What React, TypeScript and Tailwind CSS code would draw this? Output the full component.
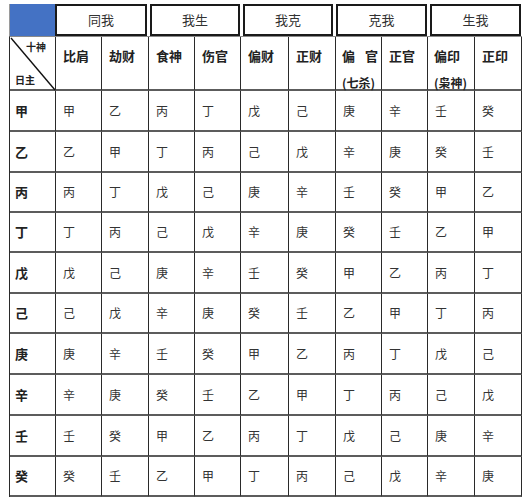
import React from 'react';

const GROUPS = [
  { label: '同我', w: 'w-[92px]' },
  { label: '我生', w: 'w-[90px]' },
  { label: '我克', w: 'w-[90px]' },
  { label: '克我', w: 'w-[91px]' },
  { label: '生我', w: 'w-[91px]' },
];

const COLS = 'grid-cols-[46px_46px_47px_46px_46px_48px_47px_46px_46px_47px_47px]';

const STEMS = ['甲', '乙', '丙', '丁', '戊', '己', '庚', '辛', '壬', '癸'];

const ROWS: string[][] = [
  ['甲', '乙', '丙', '丁', '戊', '己', '庚', '辛', '壬', '癸'],
  ['乙', '甲', '丁', '丙', '己', '戊', '辛', '庚', '癸', '壬'],
  ['丙', '丁', '戊', '己', '庚', '辛', '壬', '癸', '甲', '乙'],
  ['丁', '丙', '己', '戊', '辛', '庚', '癸', '壬', '乙', '甲'],
  ['戊', '己', '庚', '辛', '壬', '癸', '甲', '乙', '丙', '丁'],
  ['己', '戊', '辛', '庚', '癸', '壬', '乙', '甲', '丁', '丙'],
  ['庚', '辛', '壬', '癸', '甲', '乙', '丙', '丁', '戊', '己'],
  ['辛', '庚', '癸', '壬', '乙', '甲', '丁', '丙', '己', '戊'],
  ['壬', '癸', '甲', '乙', '丙', '丁', '戊', '己', '庚', '辛'],
  ['癸', '壬', '乙', '甲', '丁', '丙', '己', '戊', '辛', '庚'],
];

const ROW_H = ['h-[41px]', 'h-[41px]', 'h-[40px]', 'h-[40px]', 'h-[41px]', 'h-[40px]', 'h-[41px]', 'h-[41px]', 'h-[41px]', 'h-[40px]'];

const cell = 'border-r border-b-2 border-r-[#2a2a2a] border-b-[#5c5c5c]';

export default function App() {
  return (
    <div className="w-[528px] h-[500px] bg-white text-[#222] font-['Noto_Sans_CJK_SC','Noto_Sans',sans-serif] pt-[4px] pl-[9px] overflow-hidden">
      {/* group header */}
      <div className="flex items-stretch h-[32px]">
        <div className="w-[46px] bg-[#4472c4] border-l border-l-[#9a9a9a]" />
        {GROUPS.map((g, i) => (
          <div
            key={g.label}
            className={`${g.w} ${i > 0 ? 'ml-[3px]' : ''} border-2 border-[#1a1a1a] flex items-center justify-center text-[13px] text-[#333]`}
          >
            {g.label}
          </div>
        ))}
      </div>

      <div className={`grid ${COLS} border-l border-l-[#2a2a2a] border-t border-t-[#8a8a8a] w-[513px]`}>
        {/* header row */}
        <div className={`${cell} h-[54px] relative`}>
          <svg className="absolute inset-0" width="46" height="54" viewBox="0 0 46 54">
            <line x1="1" y1="1" x2="45" y2="53" stroke="#111" strokeWidth="1.4" />
          </svg>
          <span className="absolute left-[16px] top-[5px] text-[10px] font-bold leading-none">十神</span>
          <span className="absolute left-[5px] bottom-[4px] text-[10px] font-bold leading-none">日主</span>
        </div>
        {['比肩', '劫财', '食神', '伤官', '偏财', '正财'].map((h) => (
          <div key={h} className={`${cell} h-[54px] pl-[7px] pt-[10px] text-[13px] font-bold leading-[18px]`}>
            {h}
          </div>
        ))}
        <div className={`${cell} h-[54px] pl-[6px] pt-[10px] text-[13px] font-bold leading-[18px]`}>
          <div>偏<span className="inline-block w-[10px]" />官</div>
          <div className="mt-[9px] text-[12px]">(七杀)</div>
        </div>
        <div className={`${cell} h-[54px] pl-[7px] pt-[10px] text-[13px] font-bold leading-[18px]`}>正官</div>
        <div className={`${cell} h-[54px] pl-[6px] pt-[10px] text-[13px] font-bold leading-[18px]`}>
          <div>偏印</div>
          <div className="mt-[9px] text-[12px]">(枭神)</div>
        </div>
        <div className={`${cell} h-[54px] pl-[7px] pt-[10px] text-[13px] font-bold leading-[18px]`}>正印</div>

        {/* body */}
        {ROWS.map((row, r) => (
          <React.Fragment key={STEMS[r]}>
            <div className={`${cell} ${ROW_H[r]} pl-[5px] flex items-center text-[13px] font-bold`}>{STEMS[r]}</div>
            {row.map((v, c) => (
              <div key={c} className={`${cell} ${ROW_H[r]} pl-[7px] flex items-center text-[12px] text-[#333]`}>
                {v}
              </div>
            ))}
          </React.Fragment>
        ))}
      </div>
    </div>
  );
}
